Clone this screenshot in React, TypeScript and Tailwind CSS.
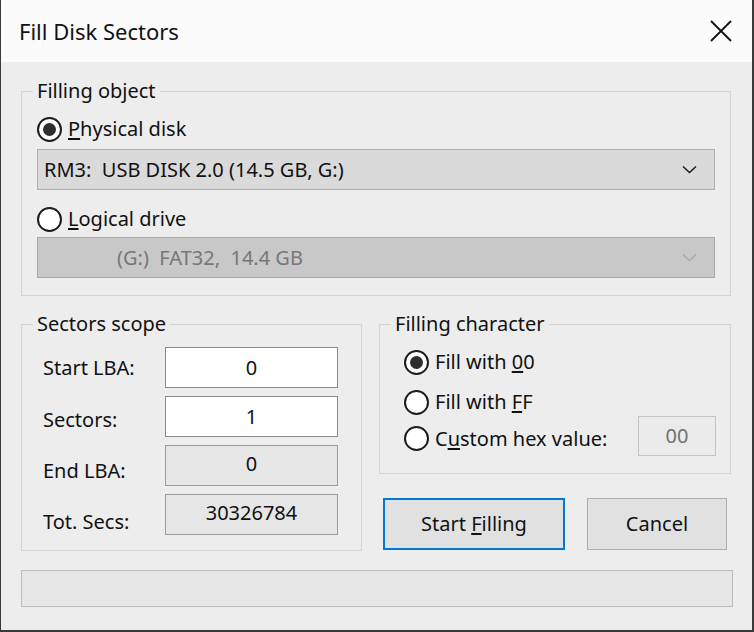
const Radio = ({ checked }: { checked?: boolean }) => (
  <span className="w-[25px] h-[25px] rounded-full border-2 border-[#1c1c1c] bg-white flex items-center justify-center shrink-0">
    {checked && <span className="w-[13px] h-[13px] rounded-full bg-[#2e2e2e]" />}
  </span>
)

const Chevron = ({ disabled }: { disabled?: boolean }) => (
  <svg width="15" height="9" viewBox="0 0 15 9" fill="none">
    <path d="M1 1.5 L7.5 7.5 L14 1.5" stroke={disabled ? '#a9a9a9' : '#1a1a1a'} strokeWidth="1.5" />
  </svg>
)

const Field = ({ value, readOnly }: { value: string; readOnly?: boolean }) => (
  <div
    className={
      readOnly
        ? 'w-[173px] h-[41px] border border-[#9c9c9c] bg-[#e6e6e6] flex items-center justify-center pb-[3px]'
        : 'w-[173px] h-[41px] border border-[#8a8a8a] bg-white flex items-center justify-center'
    }
  >
    {value}
  </div>
)

export default function App() {
  return (
    <div className="w-[754px] h-[632px] flex flex-col bg-[#ededed] border-l border-r-2 border-b-2 border-[#3a3a3a] text-[20px] text-[#111] font-['Noto_Sans',sans-serif] leading-none">
      {/* title bar */}
      <div className="h-[62px] shrink-0 bg-[#fbfbfb] flex items-center justify-between pl-[18px] pr-[20px]">
        <span className="text-[22px] text-[#111]">Fill Disk Sectors</span>
        <svg width="22" height="22" viewBox="0 0 22 22">
          <path d="M1 1 L21 21 M21 1 L1 21" stroke="#111" strokeWidth="1.8" />
        </svg>
      </div>

      <div className="flex flex-col pl-[20px] pr-[19px]">
        <div className="mr-[2px] mt-[17px]">
          <fieldset className="border border-[#d4d4d4]">
            <legend className="ml-[11px] px-[4px] leading-[24px]">Filling object</legend>
            <div className="px-[15px] pb-[17px]">
              <div className="h-[26px] mt-[13px] flex items-center gap-[6px]">
                <Radio checked />
                <span>
                  <u className="underline-offset-2">P</u>hysical disk
                </span>
              </div>
              <div className="mt-[7px] h-[41px] border border-[#adadad] bg-[#dadada] flex items-center justify-between pl-[6px] pr-[17px]">
                <span className="whitespace-pre">RM3:  USB DISK 2.0 (14.5 GB, G:)</span>
                <Chevron />
              </div>
              <div className="h-[26px] mt-[16px] flex items-center gap-[6px]">
                <Radio />
                <span>
                  <u className="underline-offset-2">L</u>ogical drive
                </span>
              </div>
              <div className="mt-[5px] h-[41px] border border-[#a8a8a8] bg-[#c8c8c8] text-[#777] flex items-center justify-between pl-[79px] pr-[17px]">
                <span className="whitespace-pre">(G:)  FAT32,  14.4 GB</span>
                <Chevron disabled />
              </div>
            </div>
          </fieldset>
        </div>

        <div className="mr-[2px] mt-[16px] flex items-start gap-[17px]">
          <fieldset className="w-[341px] border border-[#d4d4d4]">
            <legend className="ml-[11px] px-[4px] leading-[24px]">Sectors scope</legend>
            <div className="mt-[11px] flex flex-col gap-2 pl-[21px] pr-[23px] pb-[15px]">
              <div className="flex items-center justify-between">
                <span>Start LBA:</span>
                <Field value="0" />
              </div>
              <div className="flex items-center justify-between">
                <span className="pt-[6px]">Sectors:</span>
                <Field value="1" />
              </div>
              <div className="flex items-center justify-between">
                <span className="pt-[10px]">End LBA:</span>
                <Field value="0" readOnly />
              </div>
              <div className="flex items-center justify-between">
                <span className="pt-[14px]">Tot. Secs:</span>
                <Field value="30326784" readOnly />
              </div>
            </div>
          </fieldset>

          <div className="flex-1 flex flex-col">
            <fieldset className="border border-[#d4d4d4]">
              <legend className="ml-[11px] px-[4px] leading-[24px]">Filling character</legend>
              <div className="pl-[24px] pr-[14px] pb-[17px]">
                <div className="h-[26px] mt-[13px] flex items-center gap-[6px]">
                  <Radio checked />
                  <span>
                    Fill with <u className="underline-offset-2">0</u>0
                  </span>
                </div>
                <div className="h-[26px] mt-[14px] flex items-center gap-[6px]">
                  <Radio />
                  <span>
                    Fill with <u className="underline-offset-2">F</u>F
                  </span>
                </div>
                <div className="mt-px flex items-center justify-between">
                  <div className="h-[26px] flex items-center gap-[6px] pt-[5px]">
                    <Radio />
                    <span>
                      C<u className="underline-offset-2">u</u>stom hex value:
                    </span>
                  </div>
                  <div className="w-[78px] h-[40px] border border-[#c4c4c4] bg-[#ebebeb] text-[#707070] flex items-center justify-center">
                    00
                  </div>
                </div>
              </div>
            </fieldset>

            <div className="mt-[24px] ml-[4px] flex gap-[22px]">
              <button className="w-[182px] h-[52px] border-2 border-[#0078d7] bg-[#e1e1e1] text-[#111]">
                Start <u className="underline-offset-2">F</u>illing
              </button>
              <button className="w-[140px] h-[52px] border border-[#adadad] bg-[#e1e1e1] text-[#111]">
                Cancel
              </button>
            </div>
          </div>
        </div>

        <div className="mt-[19px] h-[37px] border border-[#bcbcbc] bg-[#e6e6e6]" />
      </div>
    </div>
  )
}
